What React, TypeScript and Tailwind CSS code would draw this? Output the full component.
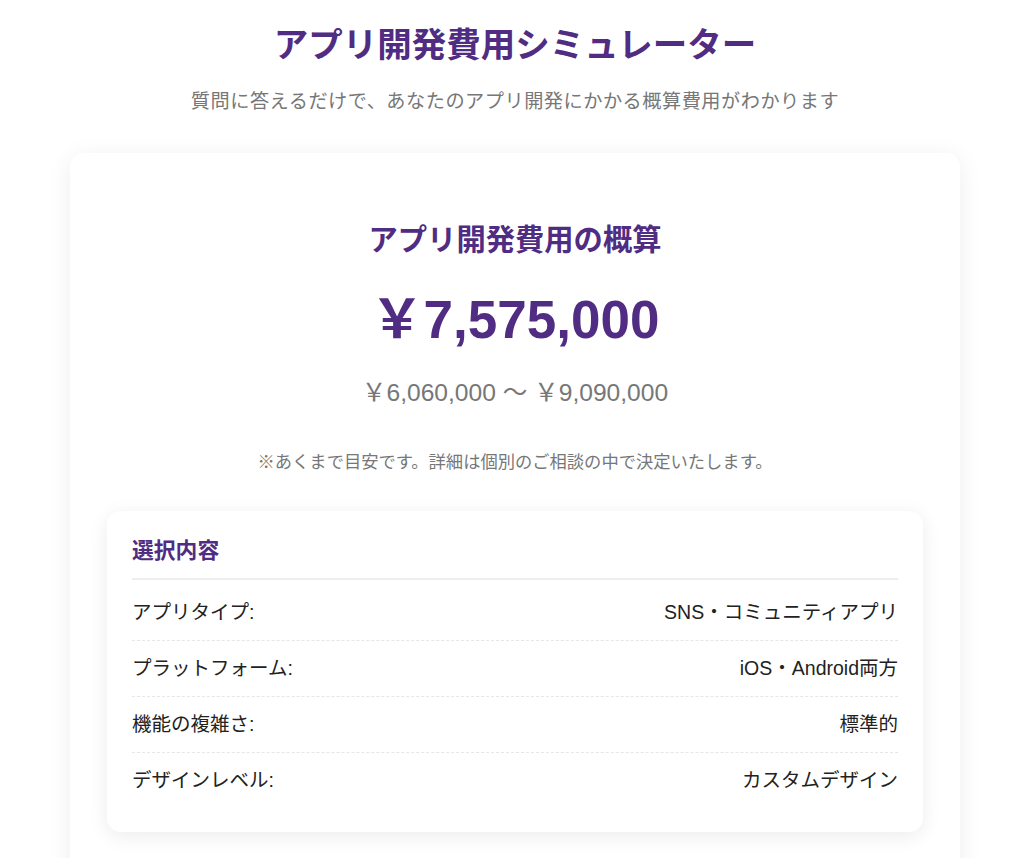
const rows: [string, string][] = [
  ['アプリタイプ:', 'SNS・コミュニティアプリ'],
  ['プラットフォーム:', 'iOS・Android両方'],
  ['機能の複雑さ:', '標準的'],
  ['デザインレベル:', 'カスタムデザイン'],
];

export default function App() {
  return (
    <div className="min-h-screen bg-white font-['Liberation_Sans','Noto_Sans_CJK_JP',sans-serif] pb-10">
      <header className="pt-[24px] text-center">
        <h1 className="text-[34.5px] leading-[42px] font-bold text-[#502c82]">
          アプリ開発費用シミュレーター
        </h1>
        <p className="mt-[22px] text-[19.2px] leading-[28px] tracking-[0.5px] text-[#777]">
          質問に答えるだけで、あなたのアプリ開発にかかる概算費用がわかります
        </p>
      </header>

      <main className="mx-auto mt-[37px] w-[890px] rounded-[14px] bg-white px-[37px] pt-[67px] pb-[60px] shadow-[0_4px_24px_rgba(0,0,0,0.07)]">
        <section className="text-center">
          <h2 className="text-[29.3px] leading-[40px] font-bold text-[#502c82]">アプリ開発費用の概算</h2>
          <div className="mt-[30px] text-[53px] leading-[60px] font-bold text-[#502c82]">￥7,575,000</div>
          <div className="mt-[27px] text-[24.6px] leading-[32px] text-[#777]">￥6,060,000 〜 ￥9,090,000</div>
          <p className="mt-[41px] text-[17.3px] leading-[24px] text-[#777]">
            ※あくまで目安です。詳細は個別のご相談の中で決定いたします。
          </p>
        </section>

        {/* 選択内容 */}
        <section className="mt-[37px] rounded-[14px] bg-white px-[25px] pt-[25px] pb-[24px] shadow-[0_4px_20px_rgba(0,0,0,0.08)]">
          <h3 className="border-b-2 border-[#eeeeee] pb-[12px] text-[21.8px] leading-[30px] font-bold text-[#502c82]">
            選択内容
          </h3>
          <div className="mt-[5px]">
            {rows.map(([label, value], i) => (
              <div
                key={label}
                className={
                  i < rows.length - 1
                    ? 'flex items-center justify-between border-b border-dashed border-[#e6e6e6] py-[14px] text-[19.5px] leading-[27px] text-[#222]'
                    : 'flex items-center justify-between py-[14px] text-[19.5px] leading-[27px] text-[#222]'
                }
              >
                <span>{label}</span>
                <span>{value}</span>
              </div>
            ))}
          </div>
        </section>
      </main>
    </div>
  );
}
